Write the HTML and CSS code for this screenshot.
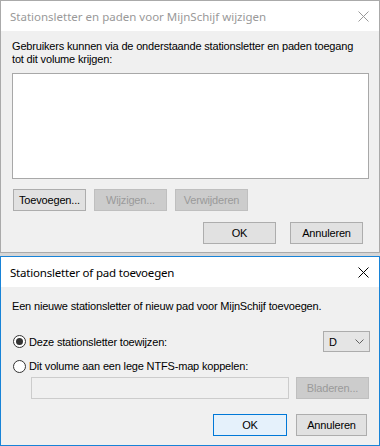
FILE: index.html
```html
<!DOCTYPE html>
<html lang="nl">
<head>
<meta charset="utf-8">
<title>Stationsletter</title>
<link rel="stylesheet" href="styles.css">
</head>
<body>
<div class="win inactive">
  <div class="titlebar">
    <span class="title">Stationsletter en paden voor MijnSchijf wijzigen</span>
    <svg class="close" width="11" height="11" viewBox="0 0 11 11"><path d="M0.5 0.5 L10.5 10.5 M10.5 0.5 L0.5 10.5" /></svg>
  </div>
  <div class="body top-body">
    <p class="desc">Gebruikers kunnen via de onderstaande stationsletter en paden toegang<br>tot dit volume krijgen:</p>
    <div class="listbox"></div>
    <div class="btnrow">
      <button class="btn">Toevoegen...</button>
      <button class="btn" disabled>Wijzigen...</button>
      <button class="btn" disabled>Verwijderen</button>
    </div>
    <div class="actions top-actions">
      <button class="btn">OK</button>
      <button class="btn">Annuleren</button>
    </div>
  </div>
</div>
<div class="shadow"></div>
<div class="win active">
  <div class="titlebar">
    <span class="title">Stationsletter of pad toevoegen</span>
    <svg class="close" width="11" height="11" viewBox="0 0 11 11"><path d="M0.5 0.5 L10.5 10.5 M10.5 0.5 L0.5 10.5" /></svg>
  </div>
  <div class="body bottom-body">
    <p class="desc">Een nieuwe stationsletter of nieuw pad voor MijnSchijf toevoegen.</p>
    <div class="opt opt-letter">
      <span class="radio checked"></span>
      <span class="label">Deze stationsletter toewijzen:</span>
      <div class="combo"><span>D</span><svg class="chev" width="9" height="5" viewBox="0 0 9 5"><path d="M0.5 0.5 L4.5 4.5 L8.5 0.5"/></svg></div>
    </div>
    <div class="opt opt-folder">
      <span class="radio"></span>
      <span class="label">Dit volume aan een lege NTFS-map koppelen:</span>
    </div>
    <div class="pathrow">
      <div class="pathinput"></div>
      <button class="btn" disabled>Bladeren...</button>
    </div>
    <div class="actions bottom-actions">
      <button class="btn default">OK</button>
      <button class="btn cancel">Annuleren</button>
    </div>
  </div>
</div>
</body>
</html>
```

FILE: styles.css
```css
* { box-sizing: border-box; margin: 0; padding: 0; }
html, body { width: 380px; height: 446px; overflow: hidden; }
body {
  background: #f0f0f0;
  font-family: "Liberation Sans", Arial, sans-serif;
  font-size: 11px;
  letter-spacing: -0.17px;
  color: #000;
}
.win { display: flex; flex-direction: column; }
.win.inactive { height: 253px; border: 1px solid #aaaaaa; }
.win.active { height: 190px; border: 1px solid #1883d7; }
.shadow { height: 3px; background: #d6d6d6; }
.titlebar {
  height: 30px;
  flex: none;
  background: #fff;
  display: flex;
  align-items: center;
  justify-content: space-between;
  padding: 0 10px 0 9px;
}
.title {
  font-family: "Noto Sans", "Open Sans", sans-serif;
  font-size: 11.5px;
  letter-spacing: 0;
}
.inactive .title { color: #999999; }
.active .title { color: #000; letter-spacing: -0.2px; }
.close path { stroke-width: 1; fill: none; }
.inactive .close path { stroke: #999999; }
.active .close path { stroke: #000; }
.body { flex: 1; background: #f0f0f0; }
.desc { line-height: 13px; }
.top-body { padding: 9px 10px 0 11px; }
.listbox {
  margin-top: 7px;
  width: 357px;
  height: 106px;
  background: #fff;
  border: 1px solid #a8a8a8;
}
.btnrow { margin-top: 10px; display: flex; gap: 8px; padding-left: 1px; }
.btn {
  width: 73px;
  height: 22px;
  border: 1px solid #adadad;
  background: #e1e1e1;
  font-family: "Liberation Sans", Arial, sans-serif;
  font-size: 11px;
  letter-spacing: -0.17px;
  color: #000;
  display: flex;
  align-items: center;
  justify-content: center;
}
.btn:disabled { background: #cccccc; border-color: #bfbfbf; color: #9a9a9a; }
.actions { display: flex; justify-content: flex-end; }
.top-actions { margin-top: 11px; gap: 14px; padding-right: 6px; }
.bottom-body { padding: 13px 9px 0 11px; }
.opt { display: flex; align-items: center; }
.opt-letter { margin-top: 18px; height: 21px; }
.opt-folder { margin-top: 6px; height: 16px; }
.radio {
  width: 13px;
  height: 13px;
  border: 1px solid #333;
  border-radius: 50%;
  background: #fff;
  flex: none;
  display: flex;
  align-items: center;
  justify-content: center;
  margin-left: 1px;
}
.radio.checked::after {
  content: "";
  width: 7px;
  height: 7px;
  border-radius: 50%;
  background: #333;
}
.label { margin-left: 3px; }
.combo {
  margin-left: auto;
  width: 47px;
  height: 21px;
  border: 1px solid #acacac;
  background: #e5e5e5;
  display: flex;
  align-items: center;
  justify-content: space-between;
  padding: 0 5px 0 5px;
}
.chev path { stroke: #606060; fill: none; stroke-width: 1; }
.pathrow { margin-top: 3px; display: flex; padding-left: 19px; }
.pathinput {
  width: 258px;
  height: 22px;
  border: 1px solid #cccccc;
  background: #f0f0f0;
}
.pathrow .btn { margin-left: 7px; }
.bottom-actions { margin-top: 15px; gap: 9px; padding-right: 3px; }
.btn.default { background: #e5f1fb; border-color: #0078d7; width: 74px; }
.btn.cancel { width: 71px; }
```
